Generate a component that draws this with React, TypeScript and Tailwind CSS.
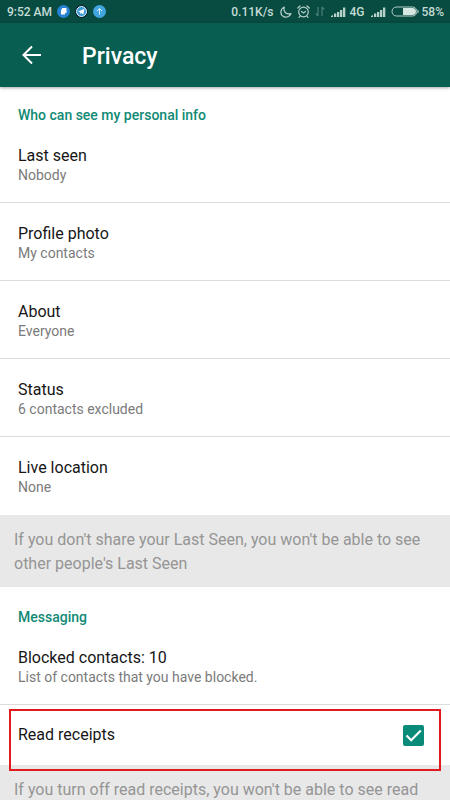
import React from 'react';

type RowProps = {
    title: string;
    value: string;
    divider?: boolean;
};

function SignalBars() {
    return (
        <svg width="15" height="10" viewBox="0 0 15 10" fill="#b5d1c9" aria-hidden="true">
            <path d="M0 10V9l2-1v2z" />
            <rect x="3" y="6.500" width="2.300" height="3.500" />
            <rect x="6" y="5" width="2.300" height="5" />
            <rect x="9" y="3" width="2.300" height="7" />
            <rect x="12" y="0.500" width="2.300" height="9.500" />
        </svg>
    );
}

function StatusBar() {
    return (
        <div className="flex h-[23px] shrink-0 items-center justify-between bg-[#074b41] pr-[6px] pl-[7px] text-xs font-medium text-[#c4dcd5]">
            <div className="flex items-center gap-[5px]">
                <span>9:52 AM</span>
                <svg width="13" height="13" viewBox="0 0 13 13" aria-hidden="true">
                    <circle cx="6.500" cy="6.500" r="6.500" fill="#2583d2" />
                    <path d="M5 3h4.500v5H8v1.500H4V4.500h1z" fill="#fff" />
                </svg>
                <svg width="13" height="13" viewBox="0 0 13 13" aria-hidden="true">
                    <circle cx="6.500" cy="6.500" r="6.500" fill="#062634" />
                    <circle cx="6.500" cy="6.500" r="5" fill="#3b9ad7" stroke="#e4f2f8" strokeWidth="1" />
                    <path d="M3 6.500l6.500-2.700-1.200 5.700-2-1.400-1 1-.2-1.800z" fill="#fff" />
                </svg>
                <svg width="13" height="13" viewBox="0 0 13 13" fill="none" aria-hidden="true">
                    <circle cx="6.500" cy="6.500" r="6.500" fill="#42a5df" />
                    <path d="M6.500 9.500V3.500M4 6l2.500-2.500L9 6" stroke="#d8effa" strokeWidth="1" />
                </svg>
            </div>

            <div className="flex items-center">
                <span>0.11K/s</span>
                <svg className="ml-[6px]" width="12" height="12" viewBox="0 0 12 12" fill="none" stroke="#b5d1c9" strokeWidth="1.200" strokeLinejoin="round" aria-hidden="true">
                    <path d="M4.300 1C3 5.500 6 9 11 7.600 9.500 10.500 6.500 11.800 3.700 10.600-.3 8.800 0 3 4.300 1z" />
                </svg>
                <svg className="ml-[5px]" width="13" height="13" viewBox="0 0 13 13" fill="none" stroke="#b5d1c9" strokeWidth="1.200" strokeLinecap="round" aria-hidden="true">
                    <circle cx="6.500" cy="7" r="4.800" />
                    <path d="M4.500 6.500l2 1.500 2-1.500M.8 3L3 1M12.200 3L10 1M3 11.300l-1 1M10 11.300l1 1" />
                </svg>
                <svg className="ml-[5px]" width="10" height="11" viewBox="0 0 10 11" fill="none" stroke="#4a8076" strokeWidth="1.200" aria-hidden="true">
                    <path d="M3 1v9M3 10L.8 7.500M7 10V1M7 1l2.200 2.500" />
                </svg>
                <span className="ml-[6px]"><SignalBars /></span>
                <span className="ml-[4px]">4G</span>
                <span className="ml-[6px]"><SignalBars /></span>
                <svg className="ml-[5px]" width="28" height="11" viewBox="0 0 28 11" aria-hidden="true">
                    <rect x="1" y="1" width="25" height="9" rx="4.500" fill="none" stroke="#b5d1c9" />
                    <path d="M12 2h9.500a3.500 3.500 0 010 7H12z" fill="#d6e6e1" />
                    <path d="M27 4v3" stroke="#b5d1c9" />
                </svg>
                <span className="ml-[3px]">58%</span>
            </div>
        </div>
    );
}

function SettingRow({ title, value, divider = true }: RowProps) {
    return (
        <button
            type="button"
            className={`block w-full px-[18px] pt-[21px] text-left ${divider ? 'border-b border-[#dcdcdc] pb-[17px]' : 'pb-[18px]'}`}
        >
            <span className="block text-base leading-5 text-[#161616]">{title}</span>
            <span className="block text-sm leading-[19px] text-[#7b7b7b]">{value}</span>
        </button>
    );
}

export default function App() {
    return (
        <div className="flex h-screen flex-col overflow-hidden bg-white font-['Roboto',sans-serif]">
            <StatusBar />

            <header className="z-10 flex h-16 shrink-0 items-center bg-[#095e52] pl-[22px] text-white shadow-[0_1px_3px_rgba(0,0,0,0.35)]">
                <button type="button" aria-label="Back">
                    <svg width="20" height="20" viewBox="0 0 20 20" fill="none" stroke="currentColor" strokeWidth="2" aria-hidden="true">
                        <path d="M19 10H2M10 1.500L1.500 10l8.500 8.500" />
                    </svg>
                </button>
                <h1 className="ml-10 pt-1 text-[23px] leading-7 font-medium">Privacy</h1>
            </header>

            <main className="flex flex-1 flex-col">
                <section>
                    <h2 className="px-[18px] pt-[18px] text-sm leading-5 font-medium text-[#108a75]">Who can see my personal info</h2>
                    <SettingRow title="Last seen" value="Nobody" />
                    <SettingRow title="Profile photo" value="My contacts" />
                    <SettingRow title="About" value="Everyone" />
                    <SettingRow title="Status" value="6 contacts excluded" />
                    <SettingRow title="Live location" value="None" divider={false} />
                    <p className="bg-[#e8e8e8] px-[14px] pt-[13px] pb-[11px] text-base leading-6 text-[#959595]">
                        If you don't share your Last Seen, you won't be able to see other people's Last Seen
                    </p>
                </section>

                <section className="flex flex-1 flex-col">
                    <h2 className="px-[18px] pt-5 text-sm leading-5 font-medium text-[#108a75]">Messaging</h2>
                    <SettingRow title="Blocked contacts: 10" value="List of contacts that you have blocked." />

                    <div className="relative">
                        <label className="flex h-[60px] items-center justify-between pr-[26px] pl-[18px] text-base leading-5 text-[#161616]">
                            Read receipts
                            <span className="grid">
                                <input
                                    type="checkbox"
                                    defaultChecked
                                    className="peer col-start-1 row-start-1 size-[21px] appearance-none rounded-[2px] border-2 border-[#757575] checked:border-[#0a8b7a] checked:bg-[#0a8b7a]"
                                />
                                <svg className="pointer-events-none invisible col-start-1 row-start-1 peer-checked:visible" width="21" height="21" viewBox="0 0 21 21" fill="none" stroke="#fff" strokeWidth="2.200" aria-hidden="true">
                                    <path d="M3.500 10.500l4.700 4.700L17.800 5.500" />
                                </svg>
                            </span>
                        </label>
                        {/* Highlight frame, reaches a little into the note below */}
                        <div className="pointer-events-none absolute top-1 right-[9px] -bottom-[6px] left-[9px] border-2 border-[#e01b1f]" />
                    </div>

                    <p className="flex-1 bg-[#e8e8e8] px-[14px] pt-[13px] text-base leading-6 text-[#959595]">
                        If you turn off read receipts, you won't be able to see read
                    </p>
                </section>
            </main>
        </div>
    );
}
